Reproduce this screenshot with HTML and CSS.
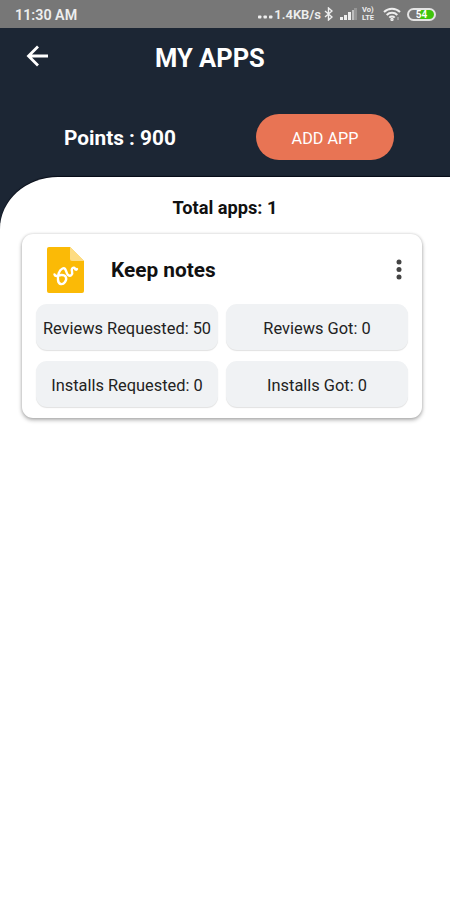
FILE: index.html
```html
<!DOCTYPE html>
<html lang="en">
<head>
  <meta charset="UTF-8" />
  <meta name="viewport" content="width=device-width, initial-scale=1.0"/>
  <title>My Apps</title>
  <link rel="stylesheet" href="styles.css">
</head>
<body>

  <div class="status-bar">
    <span class="clock">11:30 AM</span>
    <div class="status-icons">
      <svg class="dots" width="15" height="4" viewBox="0 0 15 4" fill="#eee">
        <rect x="0" y="0.5" width="3.4" height="3" rx="0.8"/>
        <rect x="5.5" y="0.5" width="3.4" height="3" rx="0.8"/>
        <rect x="11" y="0.5" width="3.4" height="3" rx="0.8"/>
      </svg>
      <span class="speed">1.4KB/s</span>
      <svg class="bluetooth" width="9" height="14" viewBox="0 0 9 14" fill="none" stroke="#eee" stroke-width="1.4">
        <path d="M1 4l7 6-3.5 3V1L8 4l-7 6"/>
      </svg>
      <svg class="signal" width="18" height="12" viewBox="0 0 18 12" fill="#eee">
        <rect x="0" y="9" width="3" height="3"/>
        <rect x="4" y="7" width="3" height="5"/>
        <rect x="8" y="4" width="3" height="8"/>
        <rect x="12" y="2" width="2" height="10" opacity="0.6"/>
        <rect x="14" y="0" width="3" height="12" opacity="0.25"/>
      </svg>
      <span class="volte"><span>Vo)</span><span>LTE</span></span>
      <svg class="wifi" width="18" height="14" viewBox="0 0 18 14" fill="none" stroke="#eee" stroke-width="2">
        <path d="M1 5a11.3 11.3 0 0 1 16 0"/>
        <path d="M3.7 8a7.5 7.5 0 0 1 10.6 0"/>
        <path d="M6.3 10.6a3.8 3.8 0 0 1 5.4 0"/>
        <circle cx="9" cy="12.4" r="0.7"/>
        <path d="M15 10v3" stroke-width="1" opacity="0.6"/>
      </svg>
      <div class="battery"><span>54</span></div>
    </div>
  </div>

  <div class="header">
    <div class="title-row">
      <svg class="back" width="24" height="24" viewBox="0 0 24 24" fill="none" stroke="#fff" stroke-width="2.8">
        <path d="M23 12H3.500M13 2.500L3.500 12l9.500 9.500"/>
      </svg>
      <h1>MY APPS</h1>
    </div>
    <div class="points-row">
      <span class="points">Points : 900</span>
      <button class="add-app">ADD APP</button>
    </div>
  </div>

  <div class="sheet-wrap">
    <div class="sheet">
      <p class="total">Total apps: 1</p>

      <div class="app-card">
        <div class="app-head">
          <svg class="app-icon" width="37" height="46" viewBox="0 0 37 46">
            <path d="M2 0h21l14 14v30a2 2 0 0 1-2 2H2a2 2 0 0 1-2-2V2a2 2 0 0 1 2-2z" fill="#fbba06"/>
            <path d="M23 0l14 14H25a2 2 0 0 1-2-2z" fill="#fddc83"/>
            <path d="M7.500 27.500C8.500 30.500 11 28.500 14 28C19 27.500 20.500 31.500 18 35C15.500 38.500 11.500 37.500 11 33C10.500 28.500 12 23 15.500 21.500C19.500 20 18.500 25.500 21 28C23.500 30 26 27.500 25 24.500C24 21 27 19.500 28 21.500C28.500 23 29.500 23 30 22" fill="none" stroke="#fff" stroke-width="2.4" stroke-linecap="round" stroke-linejoin="round"/>
          </svg>
          <h2>Keep notes</h2>
          <svg class="more" width="6" height="22" viewBox="0 0 6 22" fill="#444">
            <circle cx="3" cy="3" r="2.5"/>
            <circle cx="3" cy="10.5" r="2.5"/>
            <circle cx="3" cy="18" r="2.5"/>
          </svg>
        </div>
        <div class="stats">
          <div class="stat">Reviews Requested: 50</div>
          <div class="stat">Reviews Got: 0</div>
          <div class="stat">Installs Requested: 0</div>
          <div class="stat">Installs Got: 0</div>
        </div>
      </div>
    </div>
  </div>

</body>
</html>
```

FILE: styles.css
```css
* {
  box-sizing: border-box;
}

body {
  font-family: Roboto, sans-serif;
  background-color: #fff;
  color: #111;
  margin: 0;
  padding: 0;
}

svg {
  display: block;
  flex-shrink: 0;
}

.status-bar {
  background-color: #777;
  color: #eee;
  height: 28px;
  padding: 0 14px 0 15px;
  display: flex;
  justify-content: space-between;
  align-items: center;
  font-size: 13px;
  font-weight: 600;
}

.clock,
.speed {
  line-height: 28px;
  padding-top: 1px;
  white-space: nowrap;
}

.clock {
  font-size: 14.3px;
}

.status-icons {
  display: flex;
  align-items: center;
}

.dots {
  margin: 6px 1px 0 0;
}

.bluetooth {
  margin-left: 3px;
}

.signal {
  margin-left: 7px;
}

.volte {
  display: flex;
  flex-direction: column;
  width: 16px;
  margin-left: 4px;
  font-size: 7.5px;
  line-height: 8px;
  font-weight: 700;
}

.wifi {
  margin-left: 5px;
}

.battery {
  width: 29px;
  height: 13px;
  margin-left: 6px;
  border: 2px solid #e4e4e4;
  border-radius: 7px;
  background: linear-gradient(to right, #777 45%, #3fc40c 45%);
  color: #fff;
  font-size: 10px;
  line-height: 10px;
  text-align: center;
}

.header {
  background-color: #1c2634;
  color: #fff;
  height: 149px;
}

.title-row {
  display: flex;
  align-items: center;
  height: 60px;
  padding-left: 25px;
}

.back {
  margin-bottom: 4px;
}

.title-row h1 {
  margin: 0 0 0 106px;
  font-size: 25.5px;
  font-weight: 700;
}

.points-row {
  display: flex;
  align-items: center;
  justify-content: space-between;
  margin-top: 26px;
  padding: 0 56px 0 64px;
}

.points {
  padding-top: 1px;
  font-size: 20.8px;
  font-weight: 700;
}

.add-app {
  width: 138px;
  height: 46px;
  padding: 3px 0 0;
  border: none;
  border-radius: 23px;
  background-color: #e87454;
  color: #fff;
  font-family: inherit;
  font-size: 16.2px;
}

/* dark strip shows behind the rounded corner of the sheet */
.sheet-wrap {
  background: linear-gradient(#1c2634 46px, #fff 46px);
}

.sheet {
  background-color: #fff;
  border-top-left-radius: 58px 52px;
  min-height: 723px;
  padding: 19px 28px 0 22px;
  box-shadow: 0 -1px 1px #060b16;
}

.total {
  margin: 0;
  padding-left: 6px;
  text-align: center;
  font-size: 18.2px;
  line-height: 24px;
  font-weight: 700;
}

.app-card {
  margin-top: 14px;
  height: 184px;
  padding: 13px 14px 0;
  border-radius: 11px;
  background-color: #fff;
  box-shadow: 0 2px 4px rgba(0, 0, 0, 0.32), 0 0 3px rgba(0, 0, 0, 0.14);
}

.app-head {
  display: flex;
  align-items: center;
  height: 46px;
  padding: 0 6px 0 11px;
}

.app-head h2 {
  flex: 1;
  margin: 0 0 0 27px;
  font-size: 20.8px;
  font-weight: 700;
}

.stats {
  display: grid;
  grid-template-columns: 182px 182px;
  gap: 11px 8px;
  margin-top: 11px;
}

.stat {
  height: 46px;
  padding-top: 1px;
  border-radius: 11px;
  background-color: #f0f2f4;
  box-shadow: 0 1px 1px rgba(0, 0, 0, 0.12);
  color: #222;
  font-size: 16.4px;
  line-height: 47px;
  text-align: center;
  white-space: nowrap;
}
```
